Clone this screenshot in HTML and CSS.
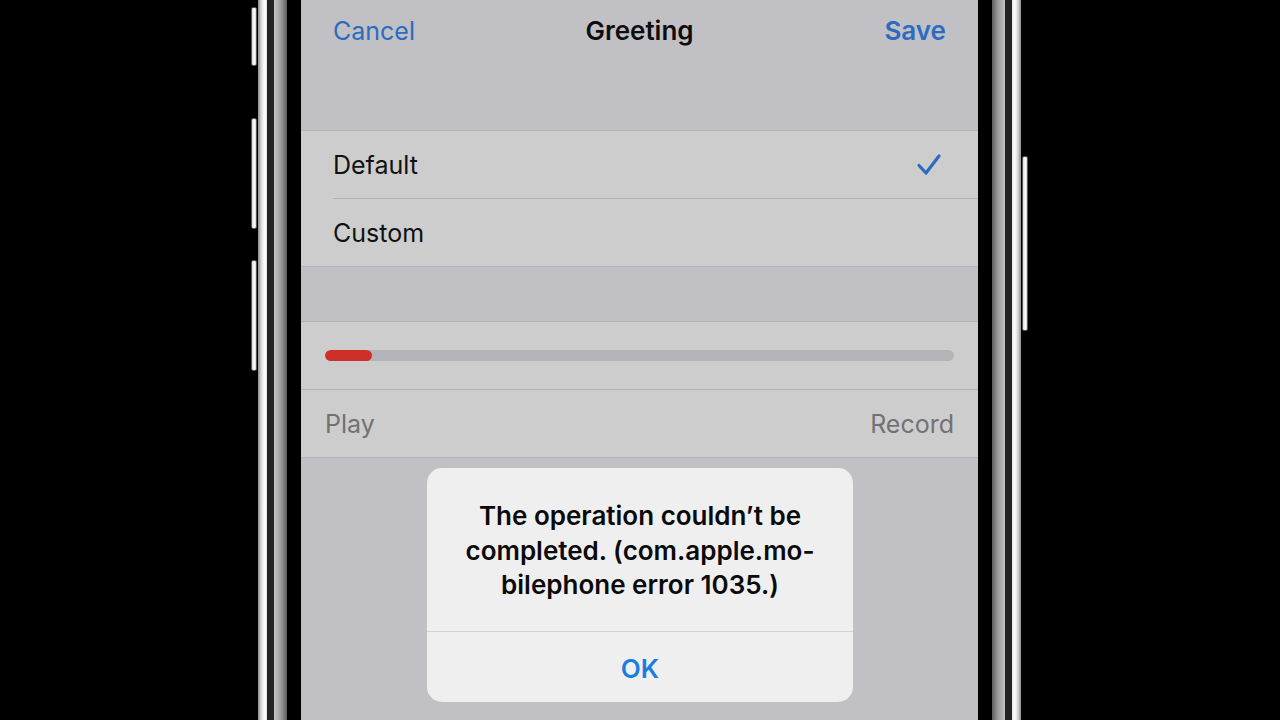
FILE: index.html
```html
<!DOCTYPE html>
<html>
<head>
<meta charset="utf-8">
<link rel="stylesheet" href="styles.css">
</head>
<body>
<div class="stage">
  <div class="side side-left">
    <span class="hw-btn hw-b1"></span>
    <span class="hw-btn hw-b2"></span>
    <span class="hw-btn hw-b3"></span>
  </div>
  <div class="rail silver-l"></div>
  <div class="rail dark"></div>
  <div class="rail metal-l"></div>
  <div class="bezel"></div>
  <div class="screen">
    <div class="nav">
      <span class="nav-btn">Cancel</span>
      <span class="nav-title">Greeting</span>
      <span class="nav-btn nav-save">Save</span>
    </div>
    <div class="group">
      <div class="row">
        <span class="row-label">Default</span>
        <svg class="check" width="26" height="24" viewBox="0 0 26 24"><path d="M3 12.5 L10 20 L23 3" fill="none" stroke="#2b6cbf" stroke-width="3.2" stroke-linecap="round" stroke-linejoin="round"/></svg>
      </div>
      <div class="sep-inset"></div>
      <div class="row">
        <span class="row-label">Custom</span>
      </div>
    </div>
    <div class="gap"></div>
    <div class="group">
      <div class="row row-progress">
        <div class="track"><div class="fill" style="width:7.5%"></div></div>
      </div>
      <div class="sep-full"></div>
      <div class="row row-actions">
        <span class="action">Play</span>
        <span class="action">Record</span>
      </div>
    </div>
    <div class="alert">
      <div class="alert-msg">The operation couldn’t be completed. (com.apple.mo-<br>bilephone error 1035.)</div>
      <div class="alert-btn">OK</div>
    </div>
  </div>
  <div class="bezel"></div>
  <div class="rail metal-r"></div>
  <div class="rail dark"></div>
  <div class="rail silver-r"></div>
  <div class="side side-right">
    <span class="hw-btn hw-b4"></span>
  </div>
</div>
</body>
</html>
```

FILE: styles.css
```css
html, body {
  margin: 0;
  padding: 0;
  background: #000;
}
body {
  width: 1280px;
  height: 720px;
  overflow: hidden;
  font-family: Inter, "Noto Sans", "Liberation Sans", sans-serif;
}
.stage {
  display: flex;
  height: 720px;
  background: #000;
}
.side {
  position: relative;
  background: #000;
  height: 720px;
}
.side-left { width: 258px; }
.side-right { flex: 1; }
.hw-btn {
  position: absolute;
  width: 4px;
  background: linear-gradient(to right, #d8d8d8, #ffffff 60%, #cfcfcf);
  border: 1px solid #555;
  border-radius: 2px;
}
.hw-b1 { left: 251px; top: 7px; height: 57px; }
.hw-b2 { left: 251px; top: 118px; height: 109px; }
.hw-b3 { left: 251px; top: 260px; height: 109px; }
.hw-b4 { left: 1px; top: 156px; height: 173px; }
.rail { height: 720px; }
.silver-l { width: 9px; background: linear-gradient(to right, #8d8d8d, #d6d6d6 35%, #ffffff 70%, #e6e6e6); }
.silver-r { width: 9px; background: linear-gradient(to left, #8d8d8d, #d6d6d6 35%, #ffffff 70%, #e6e6e6); }
.dark { width: 7px; background: #232323; }
.metal-l { width: 13px; background: linear-gradient(to right, #c4c4c4, #9a9a9a 55%, #5e5e5e); }
.metal-r { width: 13px; background: linear-gradient(to left, #c4c4c4, #9a9a9a 55%, #5e5e5e); }
.bezel { width: 14px; background: #000; }
.screen {
  position: relative;
  width: 677px;
  height: 720px;
  background: #c1c0c5;
  display: flex;
  flex-direction: column;
}
.nav {
  height: 130px;
  box-sizing: border-box;
  padding: 15px 32px 0;
  display: grid;
  grid-template-columns: 1fr auto 1fr;
  align-items: start;
  font-size: 26px;
  line-height: 32px;
}
.nav-btn { color: #2b6cbf; }
.nav-btn:first-child { font-size: 25px; }
.nav-save { text-align: right; font-weight: 600; }
.nav-title { color: #0d0d0d; font-weight: 600; }
.group {
  background: #cdcdcd;
  border-top: 1px solid #b3b3b6;
  border-bottom: 1px solid #b3b3b6;
}
.row {
  height: 67px;
  box-sizing: border-box;
  padding: 0 32px;
  display: flex;
  align-items: center;
  justify-content: space-between;
}
.row-label {
  font-size: 25px;
  color: #111;
}
.check { margin-right: 4px; }
.sep-inset {
  height: 1px;
  background: #b3b3b6;
  margin-left: 32px;
}
.sep-full {
  height: 1px;
  background: #b3b3b6;
}
.gap { height: 54px; }
.row-progress { padding: 0 24px; }
.track {
  flex: 1;
  height: 11px;
  border-radius: 6px;
  background: #b4b4b8;
  overflow: hidden;
}
.fill {
  height: 100%;
  background: #cf2f29;
  border-radius: 6px;
}
.row-actions { padding: 0 24px; }
.action {
  font-size: 25px;
  color: #727275;
}
.alert {
  position: absolute;
  left: 126px;
  top: 468px;
  width: 426px;
  height: 234px;
  background: #efeff0;
  border-radius: 15px;
  display: flex;
  flex-direction: column;
}
.alert-msg {
  padding: 31px 24px 0;
  height: 164px;
  box-sizing: border-box;
  border-bottom: 1px solid #d2d2d4;
  text-align: center;
  font-size: 26px;
  line-height: 34.5px;
  font-weight: 600;
  color: #0a0a0a;
}
.alert-btn {
  flex: 1;
  display: flex;
  align-items: center;
  justify-content: center;
  padding-top: 3px;
  font-size: 26px;
  font-weight: 600;
  color: #1a7ee0;
}
```
